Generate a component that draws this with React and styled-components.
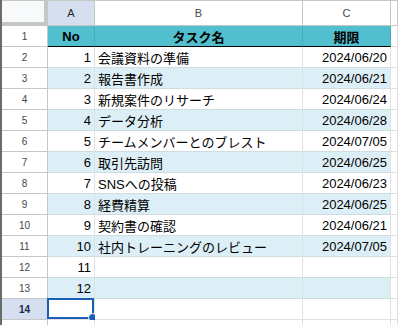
import styled, { createGlobalStyle } from "styled-components";

const GlobalStyle = createGlobalStyle`
  html, body {
    margin: 0;
    padding: 0;
    background: #ffffff;
  }
  body {
    font-family: "Liberation Sans", Arial, "Noto Sans CJK JP", sans-serif;
  }
`;

const tasks = [
  { no: 1, name: "会議資料の準備", due: "2024/06/20" },
  { no: 2, name: "報告書作成", due: "2024/06/21" },
  { no: 3, name: "新規案件のリサーチ", due: "2024/06/24" },
  { no: 4, name: "データ分析", due: "2024/06/28" },
  { no: 5, name: "チームメンバーとのブレスト", due: "2024/07/05" },
  { no: 6, name: "取引先訪問", due: "2024/06/25" },
  { no: 7, name: "SNSへの投稿", due: "2024/06/23" },
  { no: 8, name: "経費精算", due: "2024/06/25" },
  { no: 9, name: "契約書の確認", due: "2024/06/21" },
  { no: 10, name: "社内トレーニングのレビュー", due: "2024/07/05" },
  { no: 11, name: "", due: "" },
  { no: 12, name: "", due: "" },
];

const Sheet = styled.div`
  display: grid;
  grid-template-columns: 46px 47px 208px 88px 1fr;
  grid-template-rows: 26px repeat(15, 21px);
  width: 398px;
  height: 325px;
  overflow: hidden;
  border-left: 2px solid #6b6b6b;
  box-sizing: border-box;
`;

const Corner = styled.div`
  background: #f8f9fa;
  border-top: 1px solid #c4c7c5;
  border-right: 4px solid #c4c7c5;
  border-bottom: 4px solid #c4c7c5;
`;

const ColHead = styled.div`
  display: flex;
  align-items: center;
  justify-content: center;
  font-size: 11px;
  color: ${(p) => (p.$active ? "#1f1f1f" : "#444746")};
  background: ${(p) => (p.$active ? "#d5dff0" : "#ffffff")};
  border-top: 1px solid #c4c7c5;
  border-right: 1px solid #c4c7c5;
  border-bottom: 1px solid #c4c7c5;
`;

const RowHead = styled.div`
  display: flex;
  align-items: center;
  justify-content: center;
  font-size: 10px;
  color: ${(p) => (p.$active ? "#1b2a4a" : "#444746")};
  font-weight: ${(p) => (p.$active ? "bold" : "normal")};
  background: ${(p) => (p.$active ? "#d5dff0" : "#ffffff")};
  border-right: 1px solid #c4c7c5;
  border-bottom: 1px solid #c4c7c5;
`;

const Cell = styled.div`
  position: relative;
  display: flex;
  align-items: center;
  justify-content: ${(p) =>
    p.$align === "right" ? "flex-end" : p.$align === "center" ? "center" : "flex-start"};
  padding: 0 3px;
  font-size: 13px;
  color: #000000;
  white-space: nowrap;
  background: ${(p) => p.$bg || "#ffffff"};
  border-right: 1px solid #e1e1e1;
  border-bottom: 1px solid ${(p) => p.$bottom || "#e1e1e1"};
  box-sizing: border-box;
  overflow: visible;
`;

const HeadCell = styled(Cell)`
  background: #52bfcf;
  font-weight: bold;
  border-right: 1px solid #49aebc;
  border-bottom: 1px solid #000000;
`;

const Selection = styled.div`
  position: absolute;
  inset: -1px 0 0 -1px;
  border: 2px solid #1a5fb4;
  pointer-events: none;
`;

const Handle = styled.div`
  position: absolute;
  right: -5px;
  bottom: -5px;
  width: 7px;
  height: 7px;
  border-radius: 50%;
  background: #1a5fb4;
  border: 1px solid #ffffff;
`;

function App() {
  const rowBg = (i) => (i % 2 === 1 ? "#ddeff6" : "#ffffff");
  const rowLine = "#cfdde3";

  return (
    <>
      <GlobalStyle />
      <Sheet>
        <Corner />
        <ColHead $active>A</ColHead>
        <ColHead>B</ColHead>
        <ColHead>C</ColHead>
        <ColHead />

        <RowHead>1</RowHead>
        <HeadCell $align="center">No</HeadCell>
        <HeadCell $align="center">タスク名</HeadCell>
        <HeadCell $align="center">期限</HeadCell>
        <Cell />

        {tasks.map((t, i) => (
          <Row key={t.no} n={i + 2} task={t} bg={rowBg(i)} line={rowLine} />
        ))}

        <RowHead $active>14</RowHead>
        <Cell>
          <Selection>
            <Handle />
          </Selection>
        </Cell>
        <Cell />
        <Cell />
        <Cell />

        <RowHead />
        <Cell />
        <Cell />
        <Cell />
        <Cell />
      </Sheet>
    </>
  );
}

function Row({ n, task, bg, line }) {
  return (
    <>
      <RowHead>{n}</RowHead>
      <Cell $align="right" $bg={bg} $bottom={line}>
        {task.no}
      </Cell>
      <Cell $bg={bg} $bottom={line}>
        {task.name}
      </Cell>
      <Cell $align="right" $bg={bg} $bottom={line}>
        {task.due}
      </Cell>
      <Cell />
    </>
  );
}

export default App;
